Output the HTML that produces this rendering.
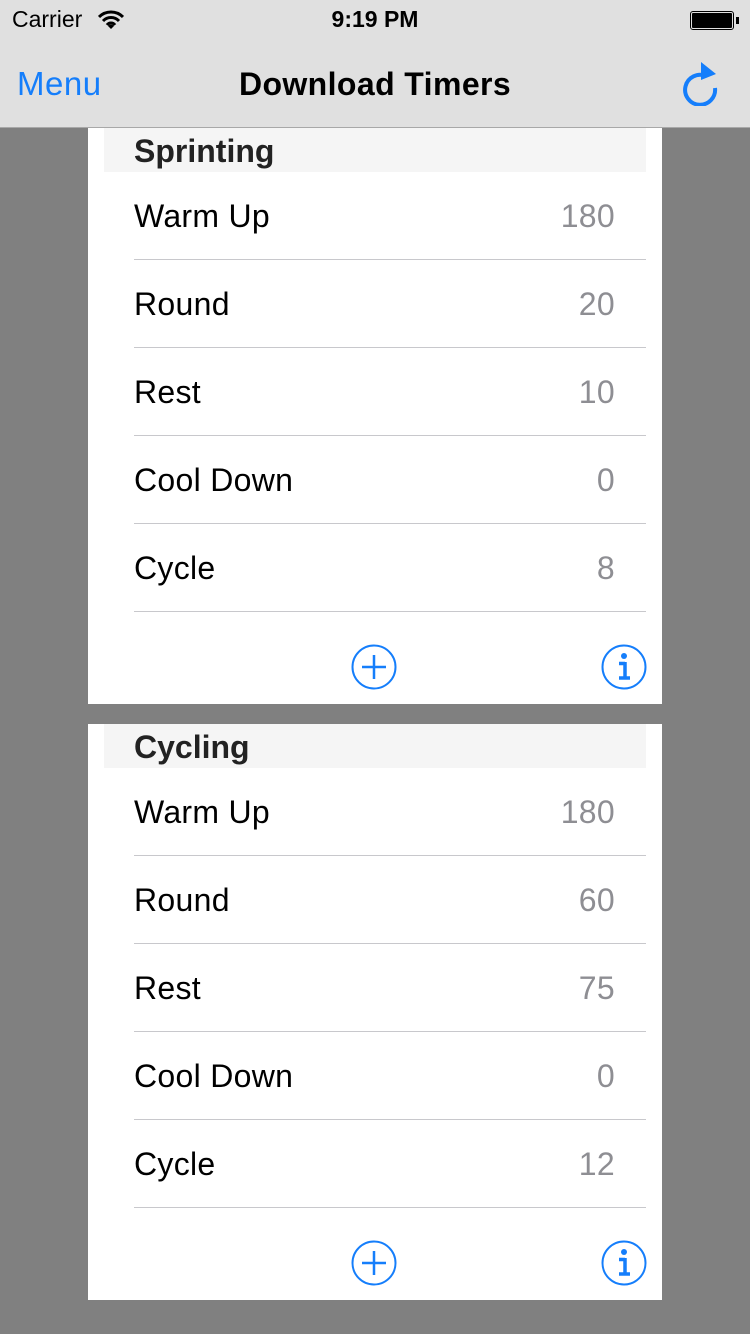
<!DOCTYPE html>
<html><head><meta charset="utf-8"><style>
*{margin:0;padding:0;box-sizing:border-box}
body{width:750px;height:1334px;background:#808080;font-family:"Liberation Sans",sans-serif;position:relative;overflow:hidden}
.nav{position:absolute;left:0;top:0;width:750px;height:128px;background:#e0e0e0;border-bottom:1px solid #a8a8a8}
.card{position:absolute;left:88px;width:574px;height:576px;background:#fff}
.hdr{position:absolute;left:16px;top:0;width:542px;height:44px;background:#f5f5f5;font-weight:bold;font-size:32px;color:#222;padding-left:30px;line-height:46px}
.row{position:absolute;left:46px;width:512px;height:88px;border-bottom:1px solid #c8c8cc;font-size:32px;color:#000;line-height:88px;letter-spacing:0.3px}
.row span{position:absolute;right:31px;color:#8e8e93}
.ic{position:absolute;top:516px}
</style></head><body>
<div class="nav">
<div style="position:absolute;left:12px;top:6px;font-size:23px">Carrier</div>
<svg style="position:absolute;left:98px;top:10px" width="26" height="20" viewBox="0 0 26 20"><path d="M1 7a17 17 0 0 1 24 0M5 11a11 11 0 0 1 16 0M9 15a5 5 0 0 1 8 0" stroke="#000" stroke-width="3" fill="none"/><path d="M10 16l3 3 3-3a4 4 0 0 0-6 0z"/></svg>
<div style="position:absolute;left:0;width:750px;text-align:center;top:6px;font-size:23px;font-weight:bold">9:19 PM</div>
<div style="position:absolute;left:690px;top:11px;width:44px;height:19px;border:1px solid #000;border-radius:3px;padding:1px"><div style="width:100%;height:100%;background:#000;border-radius:1px"></div></div>
<div style="position:absolute;left:736px;top:17px;width:3px;height:7px;background:#000"></div>
<div style="position:absolute;left:17px;top:65px;font-size:33px;color:#157efb;letter-spacing:0.5px">Menu</div>
<div style="position:absolute;left:0;width:750px;text-align:center;top:66px;font-size:32px;font-weight:bold;color:#000;letter-spacing:0.4px">Download Timers</div>
<svg style="position:absolute;left:680px;top:60px" width="42" height="46" viewBox="0 0 42 46"><path d="M26 16A15 15 0 1 0 35 28" stroke="#157efb" stroke-width="4" fill="none"/><path d="M21 2l15 12-15 6z" fill="#157efb"/></svg>
</div>

<div class="card" style="top:128px">
<div class="hdr">Sprinting</div>
<div class="row" style="top:44px">Warm Up<span>180</span></div>
<div class="row" style="top:132px">Round<span>20</span></div>
<div class="row" style="top:220px">Rest<span>10</span></div>
<div class="row" style="top:308px">Cool Down<span>0</span></div>
<div class="row" style="top:396px">Cycle<span>8</span></div>
<svg class="ic" style="left:263px" width="46" height="46" viewBox="0 0 46 46"><circle cx="23" cy="23" r="21.5" stroke="#157efb" stroke-width="2" fill="none"/><path d="M11 23h24M23 11v24" stroke="#157efb" stroke-width="2.5"/></svg>
<svg class="ic" style="left:513px" width="46" height="46" viewBox="0 0 46 46"><circle cx="23" cy="23" r="21.5" stroke="#157efb" stroke-width="2" fill="none"/><circle cx="23" cy="12" r="3" fill="#157efb"/><path d="M24 18v16M18 19.5h6M18 34h11" stroke="#157efb" stroke-width="3.5"/></svg>
</div>

<div class="card" style="top:724px">
<div class="hdr">Cycling</div>
<div class="row" style="top:44px">Warm Up<span>180</span></div>
<div class="row" style="top:132px">Round<span>60</span></div>
<div class="row" style="top:220px">Rest<span>75</span></div>
<div class="row" style="top:308px">Cool Down<span>0</span></div>
<div class="row" style="top:396px">Cycle<span>12</span></div>
<svg class="ic" style="left:263px" width="46" height="46" viewBox="0 0 46 46"><circle cx="23" cy="23" r="21.5" stroke="#157efb" stroke-width="2" fill="none"/><path d="M11 23h24M23 11v24" stroke="#157efb" stroke-width="2.5"/></svg>
<svg class="ic" style="left:513px" width="46" height="46" viewBox="0 0 46 46"><circle cx="23" cy="23" r="21.5" stroke="#157efb" stroke-width="2" fill="none"/><circle cx="23" cy="12" r="3" fill="#157efb"/><path d="M24 18v16M18 19.5h6M18 34h11" stroke="#157efb" stroke-width="3.5"/></svg>
</div>
</body></html>
